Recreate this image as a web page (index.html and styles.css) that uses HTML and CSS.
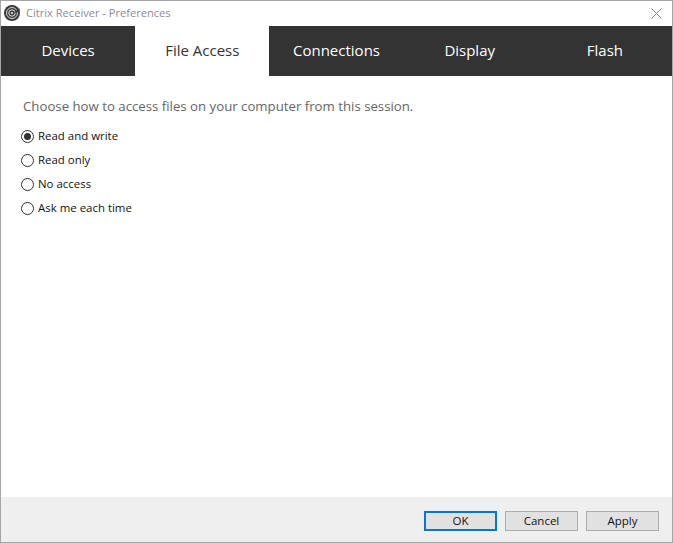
FILE: index.html
```html
<!DOCTYPE html>
<html lang="en">
<head>
<meta charset="utf-8">
<title>Citrix Receiver - Preferences</title>
<link rel="stylesheet" href="styles.css">
</head>
<body>
<div class="window">
  <header class="titlebar">
    <svg class="app-icon" width="16" height="16" viewBox="0 0 16 16" aria-hidden="true">
      <circle cx="8" cy="8" r="8" fill="#3a3a3a"/>
      <circle cx="8" cy="8" r="5.5" fill="none" stroke="#d8d8d8" stroke-width="1"/>
      <circle cx="8" cy="8" r="3.2" fill="none" stroke="#e8e8e8" stroke-width="1"/>
      <circle cx="8" cy="8" r="1.1" fill="#eee"/>
      <path d="M9 8 L15.5 3 L15.5 7 Z" fill="#3a3a3a"/>
    </svg>
    <span class="title">Citrix Receiver - Preferences</span>
    <svg class="close" width="11" height="11" viewBox="0 0 11 11" aria-hidden="true">
      <path d="M0.5 0.5 L10.5 10.5 M10.5 0.5 L0.5 10.5" stroke="#8a8a8a" stroke-width="1" fill="none"/>
    </svg>
  </header>
  <nav class="tabs">
    <div class="tab">Devices</div>
    <div class="tab active">File Access</div>
    <div class="tab">Connections</div>
    <div class="tab">Display</div>
    <div class="tab">Flash</div>
  </nav>
  <main class="content">
    <p class="prompt">Choose how to access files on your computer from this session.</p>
    <div class="options">
      <div class="option"><span class="radio checked"></span><span class="label">Read and write</span></div>
      <div class="option"><span class="radio"></span><span class="label">Read only</span></div>
      <div class="option"><span class="radio"></span><span class="label">No access</span></div>
      <div class="option"><span class="radio"></span><span class="label">Ask me each time</span></div>
    </div>
  </main>
  <footer class="footer">
    <div class="btn default">OK</div>
    <div class="btn">Cancel</div>
    <div class="btn">Apply</div>
  </footer>
</div>
</body>
</html>
```

FILE: styles.css
```css
* { box-sizing: border-box; }
html, body { margin: 0; padding: 0; height: 100%; background: #fff; }
body { font-family: "Open Sans", "Noto Sans", sans-serif; }
.window {
  width: 673px;
  height: 543px;
  border: 1px solid #a6a6a6;
  display: flex;
  flex-direction: column;
  background: #fff;
}
.titlebar {
  height: 25px;
  display: flex;
  align-items: center;
  padding: 0 10px 1px 3px;
  flex: none;
}
.app-icon { flex: none; }
.title {
  margin-left: 6px;
  font-size: 11.1px;
  line-height: 14px;
  color: #8f8a96;
  flex: 1;
}
.tabs {
  display: grid;
  grid-template-columns: repeat(5, 1fr);
  height: 50px;
  flex: none;
  background: #333;
}
.tab {
  display: flex;
  align-items: center;
  justify-content: center;
  color: #fff;
  font-size: 15px;
  padding-bottom: 3px;
}
.tab.active { background: #fff; color: #333; }
.tab:nth-child(4) { padding-right: 2px; }
.content { flex: 1; padding: 0 0 0 20px; }
.prompt {
  margin: 20px 0 0 2px;
  font-size: 13.23px;
  line-height: 20px;
  color: #666;
}
.options { margin-top: 8px; display: flex; flex-direction: column; }
.option {
  height: 24px;
  display: flex;
  align-items: center;
  gap: 4px;
  font-size: 11.45px;
  color: #111;
}
.label { padding-bottom: 2px; }
.radio {
  width: 13px;
  height: 13px;
  border: 1px solid #333;
  border-radius: 50%;
  background: #fff;
  flex: none;
  display: flex;
  align-items: center;
  justify-content: center;
}
.radio.checked::after {
  content: "";
  width: 7px;
  height: 7px;
  border-radius: 50%;
  background: #333;
}
.footer {
  height: 45px;
  flex: none;
  background: #efefef;
  display: flex;
  justify-content: flex-end;
  gap: 8px;
  padding: 14px 13px 0 0;
}
.btn {
  width: 73px;
  height: 20px;
  background: #e1e1e1;
  border: 1px solid #adadad;
  display: flex;
  align-items: center;
  justify-content: center;
  font-size: 11.5px;
  color: #111;
  padding-bottom: 1px;
}
.btn.default { border: 2px solid #0078d7; }
```
